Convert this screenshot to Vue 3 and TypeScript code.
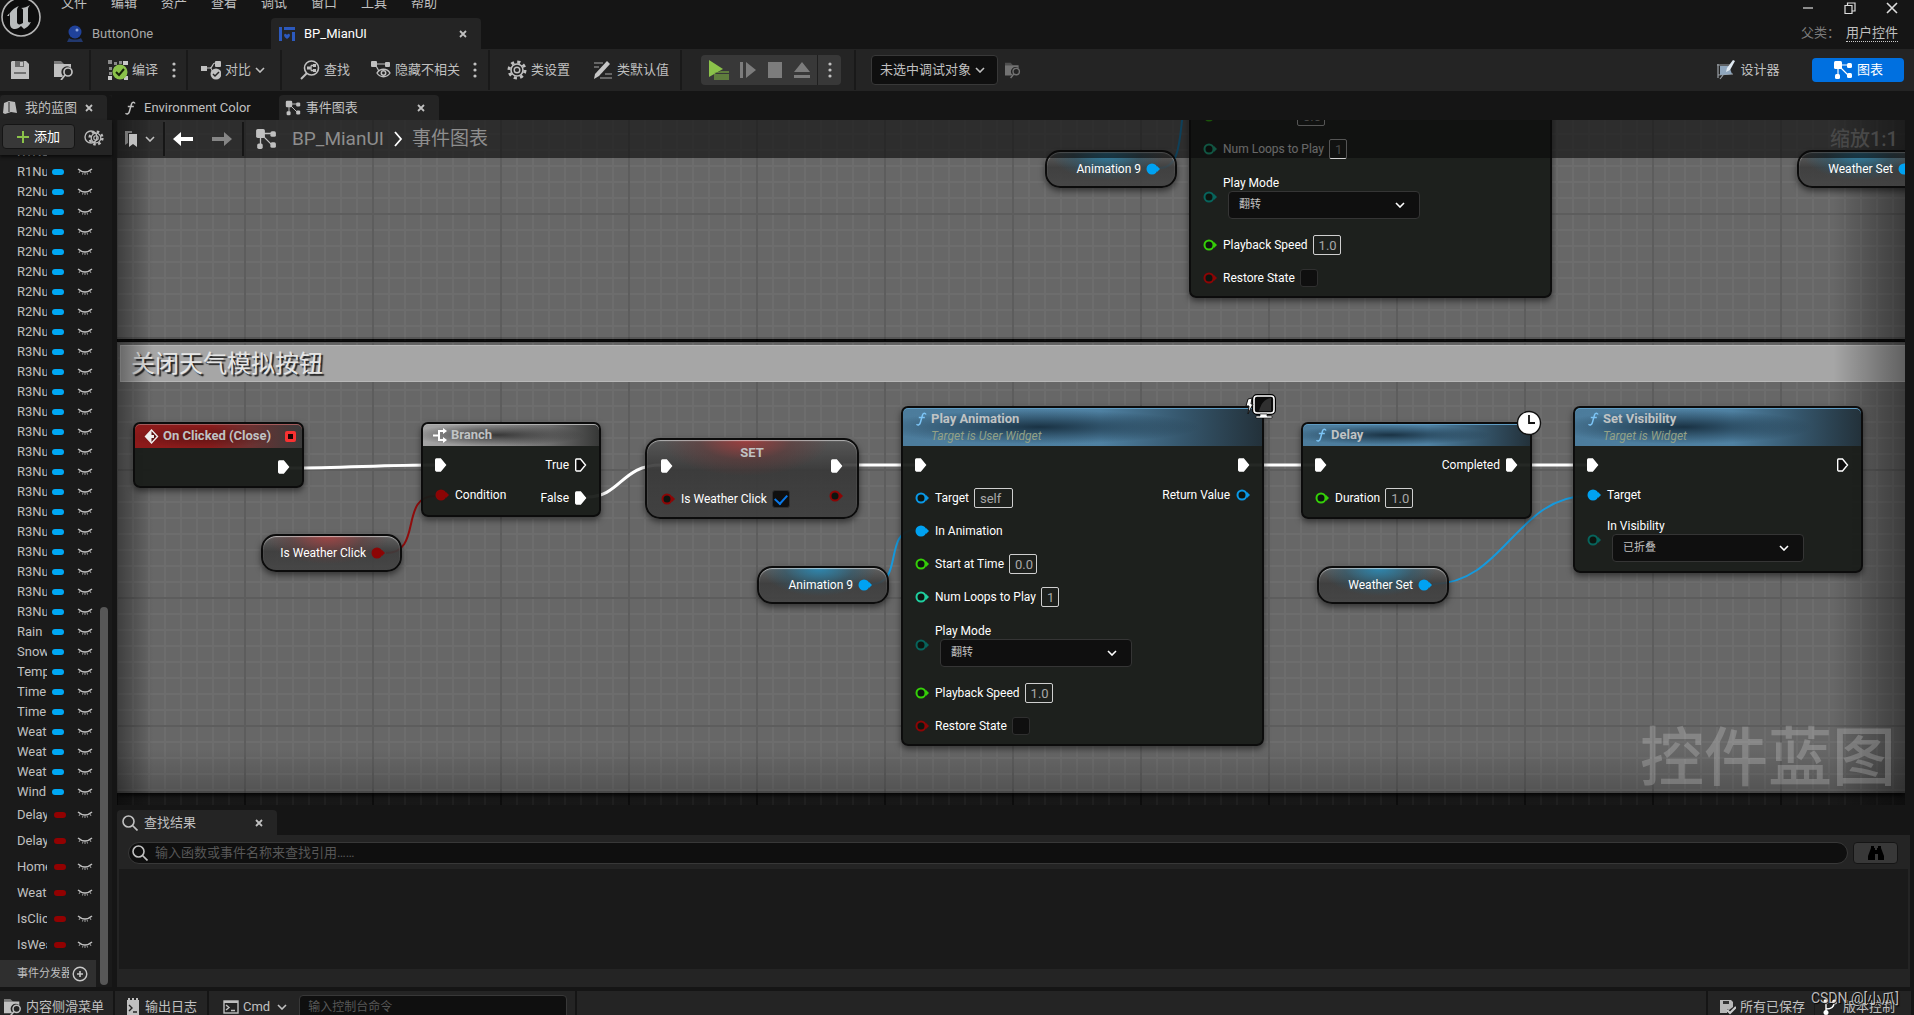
<script setup lang="ts">
import { ref } from 'vue'

type PinColor = 'object' | 'float' | 'int' | 'enum' | 'bool'

interface Pin {
  exec?: boolean
  color?: PinColor
  filled?: boolean
  label?: string
  value?: string
  size?: number
  combo?: string
  check?: boolean
  checked?: boolean
  compact?: boolean
}

interface GraphNode {
  id: string
  type: 'event' | 'branch' | 'func' | 'set' | 'getter'
  x: number
  y: number
  w: number
  h: number
  title?: string
  subtitle?: string
  tint?: 'red' | 'blue'
  badge?: 'clock' | 'screen'
  left?: Pin[]
  right?: Pin[]
}

interface Variable {
  name: string
  bool?: boolean
}

const menus = ['文件', '编辑', '资产', '查看', '调试', '窗口', '工具', '帮助']

const repeat = (name: string, count: number): Variable[] =>
  Array.from({ length: count }, () => ({ name }))

const variables: Variable[] = [
  ...repeat('R1Nu', 2),
  ...repeat('R2Nu', 8),
  ...repeat('R3Nu', 14),
  ...['Rain', 'Snow', 'Temp', 'Time', 'Time', 'Weath', 'Weath', 'Weath', 'Wind'].map((name) => ({ name })),
  ...['Delay', 'Delay', 'Home', 'Weath', 'IsClic', 'IsWea'].map((name) => ({ name, bool: true })),
]

const playAnimation = (id: string, x: number, y: number): GraphNode => ({
  id,
  type: 'func',
  x,
  y,
  w: 363,
  h: 340,
  title: 'Play Animation',
  subtitle: 'Target is User Widget',
  badge: 'screen',
  left: [
    { exec: true, filled: true },
    { color: 'object', label: 'Target', value: 'self', size: 39 },
    { color: 'object', filled: true, label: 'In Animation' },
    { color: 'float', label: 'Start at Time', value: '0.0', size: 28 },
    { color: 'int', label: 'Num Loops to Play', value: '1', size: 18 },
    { color: 'enum', label: 'Play Mode', combo: '翻转' },
    { color: 'float', label: 'Playback Speed', value: '1.0', size: 28 },
    { color: 'bool', label: 'Restore State', check: true },
  ],
  right: [
    { exec: true, filled: true },
    { color: 'object', label: 'Return Value', compact: true },
  ],
})

const getter = (id: string, x: number, y: number, w: number, title: string, tint: 'red' | 'blue'): GraphNode => ({
  id,
  type: 'getter',
  x,
  y,
  w,
  h: 38,
  title,
  tint,
})

const nodes = ref<GraphNode[]>([
  getter('anim-top', 928, 30, 132, 'Animation 9', 'blue'),
  playAnimation('play-top', 1072, -162),
  getter('weather-top', 1680, 30, 132, 'Weather Set', 'blue'),
  {
    id: 'clicked',
    type: 'event',
    x: 16,
    y: 302,
    w: 171,
    h: 66,
    title: 'On Clicked (Close)',
    right: [{ exec: true, filled: true }],
  },
  {
    id: 'branch',
    type: 'branch',
    x: 304,
    y: 302,
    w: 180,
    h: 95,
    title: 'Branch',
    left: [
      { exec: true, filled: true },
      { color: 'bool', filled: true, label: 'Condition', compact: true },
    ],
    right: [
      { exec: true, label: 'True' },
      { exec: true, filled: true, label: 'False' },
    ],
  },
  getter('is-click', 144, 414, 141, 'Is Weather Click', 'red'),
  {
    id: 'set',
    type: 'set',
    x: 528,
    y: 318,
    w: 214,
    h: 81,
    title: 'SET',
    left: [
      { exec: true, filled: true },
      { color: 'bool', label: 'Is Weather Click', check: true, checked: true },
    ],
    right: [
      { exec: true, filled: true },
      { color: 'bool', compact: true },
    ],
  },
  getter('anim', 640, 446, 132, 'Animation 9', 'blue'),
  playAnimation('play', 784, 286),
  {
    id: 'delay',
    type: 'func',
    x: 1184,
    y: 302,
    w: 231,
    h: 97,
    title: 'Delay',
    badge: 'clock',
    left: [
      { exec: true, filled: true },
      { color: 'float', label: 'Duration', value: '1.0', size: 28 },
    ],
    right: [{ exec: true, filled: true, label: 'Completed' }],
  },
  getter('weather', 1200, 446, 132, 'Weather Set', 'blue'),
  {
    id: 'visibility',
    type: 'func',
    x: 1456,
    y: 286,
    w: 290,
    h: 167,
    title: 'Set Visibility',
    subtitle: 'Target is Widget',
    left: [
      { exec: true, filled: true },
      { color: 'object', filled: true, label: 'Target', compact: true },
      { color: 'enum', label: 'In Visibility', combo: '已折叠' },
    ],
    right: [{ exec: true }],
  },
])

const wires = [
  { d: 'M173 348C225 348 266 345 318 345', kind: 'exec' },
  { d: 'M470 377C504 377 504 345 544 345', kind: 'exec' },
  { d: 'M726 345H798', kind: 'exec' },
  { d: 'M1133 345H1198', kind: 'exec' },
  { d: 'M1401 345H1470', kind: 'exec' },
  { d: 'M269 433C306 433 282 376 318 376', kind: 'bool' },
  { d: 'M755 464C787 464 766 410 798 410', kind: 'object' },
  { d: 'M1316 464C1386 464 1400 376 1470 376', kind: 'object' },
  { d: 'M1043 48C1077 48 1052 -38 1086 -38', kind: 'object' },
]
</script>

<template>
  <div class="editor">
    <svg class="defs" aria-hidden="true">
      <symbol id="chevron" viewBox="0 0 10 6"><path d="M1 1l4 4 4-4" fill="none" stroke="currentColor" stroke-width="1.6" /></symbol>
      <symbol id="cross" viewBox="0 0 8 8"><path d="M1 1l6 6M7 1L1 7" stroke="currentColor" stroke-width="1.8" /></symbol>
      <symbol id="dots" viewBox="0 0 4 18">
        <circle cx="2" cy="3" r="1.6" fill="currentColor" /><circle cx="2" cy="9" r="1.6" fill="currentColor" /><circle cx="2" cy="15" r="1.6" fill="currentColor" />
      </symbol>
      <symbol id="folder" viewBox="0 0 20 20">
        <path d="M0 1h7l3 3h-10z" fill="currentColor" opacity=".55" />
        <path d="M0 4h17v4a5.500 5.500 0 0 0-8 8l-1 1H0z" fill="currentColor" />
        <circle cx="14" cy="12" r="4" fill="none" stroke="currentColor" stroke-width="1.7" /><path d="M11 15l-4 5" stroke="currentColor" stroke-width="1.8" />
      </symbol>
      <symbol id="graph" viewBox="0 0 20 20">
        <path d="M5 5h11M5 5v12M6 6l10 10" stroke="currentColor" stroke-width="1.2" fill="none" />
        <rect x="1" y="1" width="8" height="8" rx="1.5" fill="currentColor" /><rect x="14" y="3" width="5" height="5" rx="1.5" fill="currentColor" />
        <rect x="2" y="14" width="5" height="5" rx="1.5" fill="currentColor" /><rect x="14" y="13" width="5" height="5" rx="1.5" fill="currentColor" />
      </symbol>
      <symbol id="magnifier" viewBox="0 0 16 16"><circle cx="6.5" cy="6.5" r="5.5" fill="none" stroke="currentColor" stroke-width="1.6" /><path d="M10.500 10.500l5 5" stroke="currentColor" stroke-width="1.7" /></symbol>
      <symbol id="func" viewBox="0 0 12 14"><path d="M11 2.500C10 .6 8.200 .8 7.500 3L5.400 10.500C4.800 13 3 13.500 1.500 12.200M3.800 5.500h6" fill="none" stroke="currentColor" stroke-width="1.5" /></symbol>
      <symbol id="eye" viewBox="0 0 16 8"><path d="M1 1Q8 7 15 1" fill="none" stroke="currentColor" stroke-width="1.5" /><path d="M3 3L2 5M6 4.500L5.500 6.500M8 4.500V7M10 4.500l.5 2M13 3l1 2" fill="none" stroke="currentColor" stroke-width="1" opacity=".8" /></symbol>
      <symbol id="disk" viewBox="0 0 18 18"><path d="M1 0h14l3 3v15H0V1z" fill="currentColor" /><path d="M4 0h9v6H4z" fill="#242424" opacity=".55" /><path d="M9 1h3v4H9z" fill="currentColor" /><path d="M3 12h12" stroke="#242424" stroke-width="1" /></symbol>
      <symbol id="gear" viewBox="0 0 20 20">
        <circle cx="10" cy="10" r="8" fill="none" stroke="currentColor" stroke-width="3" stroke-dasharray="3.14 3.14" />
        <circle cx="10" cy="10" r="6" fill="none" stroke="currentColor" stroke-width="1.6" /><circle cx="10" cy="10" r="2.8" fill="none" stroke="currentColor" stroke-width="1.4" />
      </symbol>
    </svg>

    <header class="titlebar">
      <svg class="logo" viewBox="0 0 42 42">
        <circle cx="21" cy="21" r="19" fill="#0d0d0d" stroke="#b4b4b4" stroke-width="1.6" />
        <path d="M9 20c1-5 5-8 10-10-1 1-2 2-2 4v12c0 2 2 3 4 2l2-1V14c0-1-1-2-2-2 3 0 6-1 9-3-1 1-2 3-2 4v12c0 1 1 2 3 1-2 4-5 6-7 7l-3-3c-2 2-4 3-6 3-3 0-5-2-5-5V18c0-1-1-1-3 2z" fill="#b9bcbd" />
      </svg>
      <div class="title-main">
        <nav class="menus"><button v-for="m in menus" :key="m" type="button">{{ m }}</button></nav>
        <div class="asset-tabs">
          <button type="button" class="asset-tab">
            <svg width="16" height="18" viewBox="0 0 16 18"><circle cx="8" cy="7" r="6.5" fill="#20429b" /><circle cx="10" cy="5" r="1.5" fill="#8ea6dc" /><path d="M0 17l2-4c3 2 9 2 12 0l2 4z" fill="#22386d" /></svg>
            ButtonOne
          </button>
          <div class="asset-tab active">
            <svg width="16" height="14" viewBox="0 0 16 14"><path d="M0 0h3v14H0zM5 0h11v3H5zM13 5h3v9h-3zM5 8c1-2 2-1 3 0 1-1 2-2 3 0 0 2-2 3-3 4-1-1-3-2-3-4z" fill="#2c59bd" /></svg>
            <span class="grow">BP_MianUI</span>
            <button type="button" aria-label="关闭"><svg width="8" height="8"><use href="#cross" /></svg></button>
          </div>
        </div>
      </div>
      <div class="window-side">
        <div class="window-buttons">
          <button type="button" aria-label="最小化"><svg width="12" height="12" viewBox="0 0 12 12"><path d="M1 6h10" stroke="#ddd" stroke-width="1.2" /></svg></button>
          <button type="button" aria-label="还原"><svg width="12" height="12" viewBox="0 0 12 12"><path d="M1 3.500h7v8H1zM3.500 3V1H11v8H8.500" fill="none" stroke="#ddd" stroke-width="1.2" /></svg></button>
          <button type="button" aria-label="关闭窗口"><svg width="12" height="12" viewBox="0 0 12 12"><path d="M1 1l10 10M11 1L1 11" stroke="#ddd" stroke-width="1.6" /></svg></button>
        </div>
        <div class="parent-class"><span>父类：</span><a href="#">用户控件</a></div>
      </div>
    </header>

    <div class="toolbar">
      <div class="group g-save">
        <button type="button" aria-label="保存"><svg width="20" height="18"><use href="#disk" /></svg></button>
        <button type="button" aria-label="浏览"><svg width="20" height="20"><use href="#folder" /></svg></button>
      </div>
      <div class="group g-compile">
        <button type="button">
          <svg width="20" height="20" viewBox="0 0 20 20">
            <path d="M0 0h4v4H0zM6 2h3v3H6zM11 1h3v3h-3zM16 1h4v4h-4zM1 7h3v3H1zM6 7h4v3H6zM1 12h3v3H1zM0 16h4v4H0z" fill="#8a8a8a" /><path d="M16 16h4v4h-4zM0 16h4v4H0zM15 1h5v4h-5z" fill="#c8c8c8" />
            <circle cx="12" cy="12" r="7.5" fill="#8bc24a" /><path d="M8 12l3 3 5-6" fill="none" stroke="#17240a" stroke-width="2" />
          </svg>
          编译
        </button>
        <button type="button" aria-label="编译选项"><svg width="4" height="18"><use href="#dots" /></svg></button>
      </div>
      <div class="group g-diff">
        <button type="button">
          <svg width="20" height="20" viewBox="0 0 20 20"><path d="M3 8h6M9 8c3 0 2-5 5-5M9 8c3 0 1 5 4 5" fill="none" stroke="#c0c0c0" stroke-width="1.2" /><rect x="0" y="6" width="6" height="5" fill="#c0c0c0" /><rect x="14" y="1" width="6" height="6" rx="1" fill="#c0c0c0" /><circle cx="15" cy="14" r="5.5" fill="#c0c0c0" /><path d="M12 14l2 2 4-4" fill="none" stroke="#242424" stroke-width="1.5" /></svg>
          对比
          <svg width="10" height="6"><use href="#chevron" /></svg>
        </button>
      </div>
      <div class="group g-find">
        <button type="button">
          <svg width="20" height="20" viewBox="0 0 20 20"><circle cx="11.5" cy="8" r="7" fill="none" stroke="#c0c0c0" stroke-width="1.6" /><path d="M7 13l-6 6" stroke="#c0c0c0" stroke-width="2" /><path d="M8 8h3M11 5.500v5M11 5.500h3M11 10.500h3" stroke="#c0c0c0" stroke-width="1.4" /><path d="M13 4h3v3h-3zM13 9h3v3h-3zM7 6.500h3v3H7z" fill="#c0c0c0" /></svg>
          查找
        </button>
        <button type="button">
          <svg width="20" height="20" viewBox="0 0 20 20"><path d="M3 4h13M4 4l5 9" stroke="#c0c0c0" stroke-width="1.2" /><rect x="0" y="1" width="6" height="6" rx="1" fill="#c0c0c0" /><rect x="14" y="2" width="5" height="5" rx="1" fill="#c0c0c0" /><path d="M6 13c3-5 10-5 13 0-3 5-10 5-13 0z" fill="#242424" stroke="#c0c0c0" stroke-width="1.4" /><circle cx="12.5" cy="13" r="2.2" fill="none" stroke="#c0c0c0" stroke-width="1.5" /></svg>
          隐藏不相关
        </button>
        <button type="button" aria-label="更多"><svg width="4" height="18"><use href="#dots" /></svg></button>
      </div>
      <div class="group g-class">
        <button type="button"><svg width="20" height="20"><use href="#gear" /></svg>类设置</button>
        <button type="button">
          <svg width="20" height="20" viewBox="0 0 20 20"><path d="M1 3h9M1 7h5M12 14h7M7 18h12" stroke="#7c7c7c" stroke-width="1.4" /><path d="M1 19l1-5L14 1l3 3L6 16z" fill="#c6c6c6" /></svg>
          类默认值
        </button>
      </div>
      <div class="play-group">
        <button type="button" aria-label="运行"><svg width="20" height="20" viewBox="0 0 20 20"><path d="M0 0l14 9-14 8z" fill="#8bc24a" /><path d="M5 14h15v6H5zM9 12l3-1h8v2H5z" fill="#5f7d3d" /></svg></button>
        <button type="button" aria-label="单步"><svg width="18" height="16" viewBox="0 0 18 16"><path d="M1 0h3v16H1zM7 0l10 8-10 8z" fill="#7c7c7c" /></svg></button>
        <button type="button" aria-label="停止"><svg width="16" height="16" viewBox="0 0 16 16"><path d="M1 0h14v16H1z" fill="#7c7c7c" /></svg></button>
        <button type="button" aria-label="弹出"><svg width="18" height="16" viewBox="0 0 18 16"><path d="M9 0l8 10H1zM1 13h16v3H1z" fill="#7c7c7c" /></svg></button>
        <button type="button" class="more" aria-label="运行选项"><svg width="4" height="18"><use href="#dots" /></svg></button>
      </div>
      <div class="debug-group">
        <span class="combo-wrap">
          <select class="debug-select" aria-label="调试对象"><option>未选中调试对象</option></select>
          <svg class="combo-arrow" width="10" height="6"><use href="#chevron" /></svg>
        </span>
        <button type="button" class="dim" aria-label="定位调试对象"><svg width="16" height="18"><use href="#folder" /></svg></button>
      </div>
      <div class="modes">
        <button type="button" class="mode">
          <svg width="20" height="20" viewBox="0 0 20 20"><path d="M1 5h13M2 4v14M2 15l15-1M4 19L15 5" stroke="#9aa0a6" stroke-width="1.2" /><path d="M4 6h9l3 8-12 1z" fill="#8fa6bd" /><path d="M17 0l2 1-5 9-4 2 1-4z" fill="#dfe8f0" /></svg>
          设计器
        </button>
        <button type="button" class="mode current"><svg width="20" height="20"><use href="#graph" /></svg>图表</button>
      </div>
    </div>

    <main class="work">
      <aside class="side">
        <div class="panel-tab side-tab">
          <svg width="14" height="14" viewBox="0 0 14 14"><path d="M1 2l5-2 6 1 2 11-6-1-6 2-2-1z" fill="#b9b9b9" /><path d="M6 1v10" stroke="#242424" /></svg>
          <span>我的蓝图</span>
          <button type="button" aria-label="关闭我的蓝图"><svg width="8" height="8"><use href="#cross" /></svg></button>
        </div>
        <div class="side-head">
          <button type="button" class="add"><svg width="12" height="12" viewBox="0 0 12 12"><path d="M6 0v12M0 6h12" stroke="#8bc24a" stroke-width="2" /></svg>添加</button>
          <button type="button" aria-label="设置"><svg width="20" height="18" viewBox="0 0 20 18"><circle cx="7" cy="8" r="6" fill="none" stroke="#bbb" stroke-width="1.4" /><g transform="translate(4 1) scale(.8)" color="#bbb"><use href="#gear" width="20" height="20" /></g></svg></button>
        </div>
        <div class="side-body">
          <ul class="vars">
            <li v-for="(v, i) in variables" :key="i" :class="{ bool: v.bool }">
              <span class="var-name">{{ v.name }}</span><i class="pill"></i><svg width="16" height="8"><use href="#eye" /></svg>
            </li>
          </ul>
          <div class="dispatchers">
            <span>事件分发器</span>
            <button type="button" aria-label="添加事件分发器"><svg width="16" height="16" viewBox="0 0 16 16"><circle cx="8" cy="8" r="6.8" fill="none" stroke="#c8c8c8" stroke-width="1.4" /><path d="M8 5v6M5 8h6" stroke="#c8c8c8" stroke-width="1.6" /></svg></button>
          </div>
          <div class="scroll-thumb"></div>
        </div>
      </aside>

      <div class="center">
        <div class="graph-tabs">
          <button type="button" class="panel-tab plain"><svg width="12" height="14"><use href="#func" /></svg>Environment Color</button>
          <div class="panel-tab graph-tab">
            <svg width="16" height="16"><use href="#graph" /></svg><span class="grow">事件图表</span>
            <button type="button" aria-label="关闭事件图表"><svg width="8" height="8"><use href="#cross" /></svg></button>
          </div>
        </div>

        <section class="canvas">
          <div class="comment upper"></div>
          <div class="comment lower"><h2>关闭天气模拟按钮</h2></div>
          <div class="vignette"></div>
          <svg class="wires" aria-hidden="true"><path v-for="w in wires" :key="w.d" :d="w.d" :class="w.kind" /></svg>

          <article
            v-for="n in nodes"
            :key="n.id"
            :class="['node', n.type, n.tint, { tall: n.subtitle }]"
            :style="{ left: n.x + 'px', top: n.y + 'px', width: n.w + 'px', height: n.h + 'px' }"
          >
            <template v-if="n.type === 'getter'">
              <span class="label">{{ n.title }}</span>
              <svg :class="['pin', n.tint === 'red' ? 'bool' : 'object', 'filled']" viewBox="0 0 14 12"><circle cx="6" cy="6" r="4.5" /><path d="M11 3l3 3-3 3z" /></svg>
            </template>
            <template v-else>
              <header class="node-head">
                <svg v-if="n.type === 'event'" class="head-icon" width="15" height="15" viewBox="0 0 15 15"><path d="M7.500 1l6 6.500-6 6.500-6-6.500z" fill="#5a0f0f" stroke="#eee" stroke-width="1.4" /><path d="M7.500 1v5H10v3H7.500v5l-6-6.500z" fill="#eee" /></svg>
                <svg v-else-if="n.type === 'branch'" class="head-icon" width="15" height="15" viewBox="0 0 15 15"><path d="M0 7.500h6M12 3H6v9h6" fill="none" stroke="#fff" stroke-width="2" /><path d="M10 0l4 3-4 3zM10 9l4 3-4 3z" fill="#fff" /></svg>
                <svg v-else-if="n.type === 'func'" class="head-icon blue-f" width="12" height="14"><use href="#func" /></svg>
                <div class="titles"><h3>{{ n.title }}</h3><p v-if="n.subtitle">{{ n.subtitle }}</p></div>
                <i v-if="n.type === 'event'" class="delegate"></i>
              </header>
              <svg v-if="n.badge === 'clock'" class="badge clock" width="26" height="26" viewBox="0 0 26 26"><circle cx="13" cy="13" r="11.5" fill="#fff" stroke="#111" stroke-width="1.4" /><path d="M13 5v8h6" fill="none" stroke="#111" stroke-width="1.8" /></svg>
              <svg v-if="n.badge === 'screen'" class="badge screen" width="32" height="28" viewBox="0 0 32 28"><rect x="9" y="2" width="20" height="17" rx="3" fill="#000" stroke="#000" stroke-width="4" /><rect x="9" y="2" width="20" height="17" rx="3" fill="#0b0b0b" stroke="#fff" stroke-width="1.6" /><path d="M14 17c2-7 5-12 12-13v13z" fill="#303030" /><path d="M15 20h7v2h5v2H11v-2h4z" fill="#fff" stroke="#000" stroke-width=".6" /><path d="M3 5l4-1-1 6h2L3 20l1-8H1z" fill="#fff" stroke="#111" stroke-width="1" /></svg>
              <div class="pins">
                <div v-for="side in (['left', 'right'] as const)" :key="side" :class="['col', side]">
                  <div v-for="(p, i) in n[side] ?? []" :key="i" :class="['row', { compact: p.compact, combo: p.combo }]">
                    <svg v-if="p.exec" :class="['exec-pin', { filled: p.filled }]" viewBox="0 0 12 14"><path d="M1.500 1h4l5 6-5 6h-4a1 1 0 0 1-.8-1V2a1 1 0 0 1 .8-1z" stroke-width="1.4" /></svg>
                    <svg v-else :class="['pin', p.color, { filled: p.filled }]" viewBox="0 0 14 12"><circle cx="6" cy="6" r="4.5" /><path d="M11 3l3 3-3 3z" /></svg>
                    <label v-if="p.combo" class="combo-field">
                      <span class="label">{{ p.label }}</span>
                      <span class="combo-wrap">
                        <select><option>{{ p.combo }}</option></select>
                        <svg class="combo-arrow" width="10" height="6"><use href="#chevron" /></svg>
                      </span>
                    </label>
                    <label v-else-if="p.value || p.check" class="field">
                      <span class="label">{{ p.label }}</span>
                      <input v-if="p.value" v-model="p.value" type="text" :style="{ width: p.size + 'px' }" />
                      <input v-else v-model="p.checked" type="checkbox" />
                    </label>
                    <span v-else-if="p.label" class="label">{{ p.label }}</span>
                  </div>
                </div>
              </div>
            </template>
          </article>

          <div class="graph-bar">
            <button type="button" class="bookmark" aria-label="书签"><svg width="12" height="16" viewBox="0 0 12 16"><path d="M0 0h7v2H3v10l-3 2z" fill="#777" /><path d="M4 3h8v13l-4-3-4 3z" fill="#c0c0c0" /></svg><svg width="10" height="6"><use href="#chevron" /></svg></button>
            <div class="history">
              <button type="button" aria-label="后退"><svg width="20" height="14" viewBox="0 0 20 14"><path d="M0 7l8-7v5h12v4H8v5z" fill="#fff" /></svg></button>
              <button type="button" aria-label="前进"><svg width="20" height="14" viewBox="0 0 20 14"><path d="M20 7l-8-7v5H0v4h12v5z" fill="#858585" /></svg></button>
            </div>
            <svg class="crumb-icon" width="24" height="22"><use href="#graph" /></svg>
            <span class="crumb">BP_MianUI</span>
            <svg class="crumb-sep" width="9" height="16" viewBox="0 0 9 16"><path d="M1 1l6 7-6 7" fill="none" stroke="#fff" stroke-width="1.8" /></svg>
            <span class="crumb">事件图表</span>
            <span class="zoom">缩放1:1</span>
          </div>
          <div class="graph-mark">控件蓝图</div>
        </section>

        <section class="results">
          <div class="panel-tab results-tab">
            <svg width="16" height="16"><use href="#magnifier" /></svg><span class="grow">查找结果</span>
            <button type="button" aria-label="关闭查找结果"><svg width="8" height="8"><use href="#cross" /></svg></button>
          </div>
          <div class="results-body">
            <div class="search-row">
              <label class="search"><svg width="16" height="16"><use href="#magnifier" /></svg><input type="text" aria-label="查找" placeholder="输入函数或事件名称来查找引用……" /></label>
              <button type="button" class="global-find" aria-label="全局查找"><svg width="16" height="14" viewBox="0 0 16 14"><path d="M3 0h3v2h1v2h2V2h1V0h3v2l3 8v4h-6V8H7v6H0v-4l3-8z" fill="#000" /></svg></button>
            </div>
            <div class="result-list"></div>
          </div>
        </section>
      </div>
    </main>

    <footer class="status">
      <button type="button" class="cell drawer"><svg width="18" height="18"><use href="#folder" /></svg>内容侧滑菜单</button>
      <button type="button" class="cell log"><svg width="12" height="18" viewBox="0 0 12 18"><path d="M0 2h1V0h2v2h2V0h2v2h2V0h2v2h1v16H0z" fill="#c0c0c0" /><path d="M2 7l3 3-3 3M6 14h4" fill="none" stroke="#242424" stroke-width="1.4" /></svg>输出日志</button>
      <div class="cell console">
        <button type="button"><svg width="16" height="14" viewBox="0 0 16 14"><rect x="1" y="1" width="14" height="12" fill="none" stroke="#c0c0c0" stroke-width="1.4" /><path d="M1 2h14" stroke="#c0c0c0" stroke-width="2" /><path d="M3 5l3 2.500L3 10M8 10.500h4" fill="none" stroke="#c0c0c0" stroke-width="1.4" /></svg>Cmd<svg width="10" height="6"><use href="#chevron" /></svg></button>
        <input type="text" aria-label="控制台命令" placeholder="输入控制台命令" />
      </div>
      <div class="cell grow"></div>
      <div class="cell source">
        <button type="button"><svg width="16" height="16" viewBox="0 0 16 16"><path d="M0 1h11l2 2v5l-4 3-2-1v4H0z" fill="#b8b8b8" /><path d="M3 2h6v3H3z" fill="#333" /><path d="M7 11l3 3 6-6" fill="none" stroke="#ccc" stroke-width="2.2" /></svg>所有已保存</button>
        <button type="button" class="vcs"><svg width="14" height="16" viewBox="0 0 14 16"><path d="M3 2v12M3 10c6 0 8-2 8-6" fill="none" stroke="#fff" stroke-width="1.4" /><circle cx="3" cy="2.5" r="2.5" fill="#fff" /><circle cx="3" cy="13.5" r="2.5" fill="#fff" /><circle cx="11.5" cy="3" r="2.5" fill="#fff" /></svg>版本控制</button>
      </div>
      <span class="credit">CSDN @[小瓜]</span>
    </footer>
  </div>
</template>

<style>
html,
body,
#app {
  height: 100%;
}
body {
  margin: 0;
  background: #151515;
}
</style>

<style scoped>
* {
  box-sizing: border-box;
}
.editor {
  display: flex;
  flex-direction: column;
  height: 100%;
  overflow: hidden;
  background: #151515;
  color: #c0c0c0;
  font: 13px/16px Roboto, 'Noto Sans CJK SC', sans-serif;
}
.defs {
  position: absolute;
  width: 0;
  height: 0;
}
svg {
  display: block;
  flex: none;
}
button {
  display: flex;
  align-items: center;
  gap: 4px;
  padding: 0;
  border: 0;
  background: none;
  color: inherit;
  font: inherit;
  white-space: nowrap;
}
input,
select {
  font: inherit;
  margin: 0;
}
select {
  appearance: none;
}
h2,
h3,
p,
ul {
  margin: 0;
  padding: 0;
}
.grow {
  flex: 1;
}

/* title bar */
.titlebar {
  display: flex;
  flex: none;
  height: 49px;
  overflow: hidden;
}
.logo {
  width: 42px;
  height: 42px;
  margin-top: -4px;
}
.title-main {
  display: flex;
  flex-direction: column;
  justify-content: space-between;
}
.menus {
  display: flex;
  gap: 24px;
  height: 18px;
  margin-left: 19px;
}
.menus button {
  height: 16px;
  margin-top: -5px;
}
.asset-tabs {
  display: flex;
  height: 31px;
}
.asset-tab {
  display: flex;
  align-items: center;
  gap: 9px;
  width: 204px;
  margin-left: 25px;
  color: #a8a8a8;
}
.asset-tab.active {
  width: 210px;
  margin: 0;
  padding: 0 14px 0 8px;
  border-radius: 4px 4px 0 0;
  background: #242424;
  color: #fff;
}
.active button {
  color: #c0c0c0;
}
.window-side {
  display: flex;
  flex-direction: column;
  align-items: flex-end;
  gap: 11px;
  margin-left: auto;
  padding: 2px 16px 0 0;
}
.window-buttons {
  display: flex;
  gap: 30px;
}
.parent-class {
  display: flex;
  gap: 6px;
  color: #7c7c7c;
}
.parent-class a {
  border-bottom: 1px dotted #ccc;
  color: #c0c0c0;
  text-decoration: none;
}

/* main toolbar */
.toolbar {
  display: flex;
  align-items: center;
  flex: none;
  height: 42px;
  background: #242424;
}
.group {
  display: flex;
  align-items: center;
  height: 40px;
  border-right: 2px solid #191919;
}
.g-save {
  gap: 24px;
  padding: 0 15px 0 10px;
}
.g-compile {
  gap: 14px;
  padding: 0 10px 0 17px;
}
.g-diff {
  padding: 0 15px 0 13px;
}
.g-find {
  gap: 21px;
  padding: 0 11px 0 18px;
}
.g-find button:last-child {
  margin-left: -8px;
}
.g-class {
  gap: 23px;
  padding: 0 11px 0 17px;
}
.play-group {
  display: flex;
  align-items: center;
  gap: 10px;
  height: 30px;
  margin-left: 19px;
  padding-left: 8px;
  border-radius: 4px;
  background: #383838;
}
.play-group .more {
  justify-content: center;
  width: 24px;
  height: 30px;
  margin-left: -4px;
  border-left: 1px solid #1f1f1f;
}
.debug-group {
  display: flex;
  align-items: center;
  gap: 7px;
  height: 40px;
  margin-left: 13px;
  padding-left: 15px;
  border-left: 2px solid #191919;
}
.combo-wrap {
  display: flex;
  position: relative;
}
.combo-arrow {
  position: absolute;
  top: calc(50% - 3px);
  right: 13px;
  pointer-events: none;
}
.debug-select {
  width: 127px;
  height: 30px;
  padding: 0 0 0 8px;
  border: 1px solid #383838;
  border-radius: 4px;
  background: #0f0f0f;
  color: #c0c0c0;
}
.dim {
  opacity: 0.5;
}
.modes {
  display: flex;
  gap: 18px;
  margin-left: auto;
  padding-right: 10px;
}
.mode {
  justify-content: center;
  width: 92px;
  height: 24px;
  border-radius: 4px;
}
.mode.current {
  background: #0070e0;
  color: #fff;
}

/* workspace */
.work {
  display: flex;
  flex: 1;
  min-height: 0;
  padding: 4px 0;
}
.panel-tab {
  display: flex;
  align-items: center;
  flex: none;
  height: 25px;
  border-radius: 4px 4px 0 0;
  background: #242424;
}
.side {
  display: flex;
  flex-direction: column;
  flex: none;
  width: 112px;
  margin-right: 5px;
  background: #1a1a1a;
}
.side-tab {
  gap: 8px;
  padding-left: 3px;
  box-shadow: inset -5px 0 #151515;
}
.side-head {
  display: flex;
  position: relative;
  z-index: 1;
  flex: none;
  gap: 9px;
  height: 35px;
  padding: 4px 2px;
  background: #242424;
  box-shadow: 0 2px 3px rgba(0, 0, 0, 0.6);
}
.add {
  gap: 5px;
  justify-content: center;
  width: 73px;
  height: 25px;
  border: 1px solid #151515;
  border-radius: 4px;
  background: #383838;
  color: #fff;
}
.side-body {
  position: relative;
  flex: 1;
  min-height: 0;
  overflow: hidden;
}
.vars {
  margin-top: -13px;
  list-style: none;
}
.vars li {
  display: flex;
  align-items: center;
  height: 20px;
  padding-left: 17px;
}
.vars li.bool {
  height: 26px;
}
.var-name {
  width: 30px;
  margin-right: 5px;
  overflow: hidden;
}
.pill {
  width: 12px;
  height: 6px;
  margin-right: 13px;
  border-radius: 3px;
  background: #00a8f5;
}
.bool .pill {
  margin: 0 11px 0 2px;
  background: #920101;
}
.dispatchers {
  display: flex;
  align-items: center;
  gap: 3px;
  width: 96px;
  height: 27px;
  margin-top: 2px;
  padding-left: 17px;
  background: #2f2f2f;
  font-size: 11px;
}
.dispatchers span {
  width: 52px;
  overflow: hidden;
  white-space: nowrap;
}
.scroll-thumb {
  position: absolute;
  right: 4px;
  bottom: 2px;
  width: 8px;
  height: 378px;
  border-radius: 4px;
  background: #575757;
}
.center {
  display: flex;
  flex-direction: column;
  flex: 1;
  min-width: 0;
}
.graph-tabs {
  display: flex;
  flex: none;
  gap: 28px;
}
.panel-tab.plain {
  gap: 8px;
  padding-left: 7px;
  background: none;
}
.graph-tab {
  gap: 5px;
  width: 160px;
  padding: 0 14px 0 6px;
}

/* blueprint canvas */
.canvas {
  position: relative;
  flex: 1;
  min-height: 0;
  margin-right: 9px;
  overflow: hidden;
  background-color: #1f1f1f;
  background-image:
    linear-gradient(90deg, #111 2px, transparent 2px),
    linear-gradient(#111 2px, transparent 2px),
    linear-gradient(90deg, #292929 2px, transparent 2px),
    linear-gradient(#292929 2px, transparent 2px);
  background-size: 128px 128px, 128px 128px, 16px 16px, 16px 16px;
  background-position: 127px 0, 0 93px, 15px 0, 0 13px;
}
.comment {
  position: absolute;
  right: 0;
  left: 0;
  border-bottom: 2px solid rgba(0, 0, 0, 0.15);
  background: rgba(255, 255, 255, 0.32);
  box-shadow: 0 2px 5px #000;
}
.upper {
  top: 0;
  height: 219px;
}
.lower {
  top: 222px;
  height: 451px;
  padding: 3px 0 0 3px;
}
.lower h2 {
  height: 37px;
  padding-left: 10px;
  border: 1px solid #b8b8b8;
  border-right: 0;
  background: #a6a6a6;
  color: #e6e6e6;
  font-size: 24px;
  font-weight: 400;
  line-height: 37px;
  text-shadow: 2px 2px 1px #222;
}
.vignette {
  position: absolute;
  inset: 0;
  background:
    linear-gradient(90deg, rgba(0, 0, 0, 0.4), transparent 36px),
    linear-gradient(270deg, rgba(0, 0, 0, 0.42), transparent 72px),
    linear-gradient(0deg, rgba(0, 0, 0, 0.25), transparent 56px);
}
.wires {
  position: absolute;
  width: 100%;
  height: 100%;
  fill: none;
}
.wires .exec {
  stroke: #fff;
  stroke-width: 3;
}
.wires .bool {
  stroke: #8f0d0d;
  stroke-width: 2;
}
.wires .object {
  stroke: #1699dc;
  stroke-width: 2;
}
.node {
  position: absolute;
  border: 2px solid #0c0c0c;
  border-radius: 7px;
  background: rgba(25, 28, 25, 0.95);
  box-shadow: 0 3px 6px rgba(0, 0, 0, 0.5);
  color: #fff;
}
.label {
  color: #fff;
  font-size: 12px;
  white-space: nowrap;
}
.node-head {
  display: flex;
  height: 22px;
  padding: 3px 12px 0;
  border-radius: 5px 5px 0 0;
}
.tall .node-head {
  height: 38px;
}
.head-icon {
  margin: 1px 3px 0 -2px;
}
.head-icon.blue-f {
  margin: 1px 4px 0 0;
  color: #7cc4f5;
}
.titles {
  flex: 1;
}
.node h3 {
  color: #c0c3c4;
  font-size: 13px;
  font-weight: 700;
  line-height: 16px;
  white-space: nowrap;
}
.node p {
  color: #93a186;
  font-size: 12px;
  font-style: italic;
  line-height: 18px;
}
.func .node-head {
  background:
    radial-gradient(ellipse 45% 45% at 38% 50%, rgba(20, 42, 58, 0.9), rgba(20, 42, 58, 0.4) 55%, transparent),
    linear-gradient(90deg, #4c7c9c, #4f81a2 55%, #35566c 78%, #23313a);
  box-shadow: inset 0 1px #5e9cc4;
}
.event .node-head {
  height: 24px;
  background:
    radial-gradient(ellipse 45% 45% at 40% 55%, rgba(70, 14, 14, 0.6), transparent),
    linear-gradient(90deg, #8d1a1a, #8a1c1c 45%, #6b3232 70%, #3a3b3b);
  box-shadow: inset 0 1px #a35a5a;
}
.branch .node-head {
  background:
    radial-gradient(ellipse 50% 50% at 42% 50%, rgba(40, 40, 40, 0.85), transparent),
    linear-gradient(90deg, #a4a4a4, #8e8e8e 45%, #6e6e6e 72%, #373837);
  box-shadow: inset 0 1px #b0b0b0;
}
.event .head-icon {
  margin: 2px 4px 0 -3px;
}
.event h3 {
  line-height: 18px;
}
.delegate {
  width: 11px;
  height: 11px;
  margin: 4px -6px 0 0;
  border: 3px solid #f93131;
  border-radius: 2px;
  background: #1d0505;
}
.badge {
  position: absolute;
}
.badge.clock {
  top: -14px;
  right: -12px;
}
.badge.screen {
  top: -14px;
  right: -15px;
}
.pins {
  display: flex;
  justify-content: space-between;
  padding: 9px 12px 0;
}
.col {
  display: flex;
  flex-direction: column;
  gap: 13px;
}
.row {
  display: flex;
  align-items: center;
  gap: 6px;
  height: 20px;
}
.row.compact {
  height: 14px;
}
.row.combo {
  height: 50px;
}
.right .row {
  flex-direction: row-reverse;
}
.field {
  display: flex;
  align-items: center;
  gap: 5px;
}
.exec-pin {
  width: 12px;
  height: 14px;
  fill: #0d0d0d;
  stroke: #fff;
}
.exec-pin.filled {
  fill: #fff;
}
.pin {
  width: 14px;
  height: 12px;
  color: #0a98e6;
  stroke: currentColor;
}
.pin circle {
  fill: #0d1510;
  stroke-width: 2px;
}
.pin path {
  fill: currentColor;
  stroke: none;
}
.pin.filled circle {
  fill: currentColor;
}
.pin.filled {
  color: #00a2f2;
}
.pin.float {
  color: #35cf08;
}
.pin.int {
  color: #1fcf9f;
}
.pin.enum {
  color: #07645c;
}
.pin.bool {
  color: #8c0505;
}
.row input[type='text'] {
  height: 20px;
  padding: 0 0 0 5px;
  border: 1px solid #cfcfcf;
  border-radius: 2px;
  background: none;
  color: #a8a8a8;
}
.row input[type='checkbox'] {
  appearance: none;
  display: grid;
  place-items: center;
  width: 18px;
  height: 18px;
  border: 1px solid #2f2f2f;
  border-radius: 3px;
  background: #0f0f0f;
}
.row input[type='checkbox']:checked::before {
  width: 10px;
  height: 6px;
  margin-bottom: 3px;
  border: solid #0a78e8;
  border-width: 0 0 2px 2px;
  content: '';
  transform: rotate(-48deg);
}
.combo-field {
  display: flex;
  flex-direction: column;
}
.combo-field .combo-wrap {
  margin-left: 5px;
}
.combo-field select {
  width: 192px;
  height: 28px;
  padding: 0 0 0 10px;
  border: 1px solid #353535;
  border-radius: 4px;
  background: #0f0f0f;
  color: #c0c0c0;
  font-size: 11px;
}
.combo-field .combo-arrow {
  right: 15px;
}
.set,
.getter {
  border-radius: 15px;
  box-shadow: inset 0 1px 1px rgba(255, 255, 255, 0.55), 0 3px 6px rgba(0, 0, 0, 0.5);
}
.set {
  background:
    radial-gradient(ellipse 40% 36px at 47% 0, rgba(165, 60, 60, 0.9), rgba(110, 50, 50, 0.4) 55%, transparent),
    linear-gradient(rgba(85, 85, 85, 0.92), rgba(56, 56, 56, 0.92) 40%, rgba(62, 62, 62, 0.92));
}
.set .node-head {
  justify-content: center;
  height: 16px;
  padding-top: 5px;
  text-align: center;
}
.set .pins {
  padding: 0 14px;
}
.getter {
  display: flex;
  align-items: center;
  justify-content: flex-end;
  gap: 5px;
  padding-right: 15px;
}
.getter.blue {
  background:
    radial-gradient(ellipse 45% 28px at 47% 0, rgba(40, 140, 185, 0.9), rgba(40, 95, 120, 0.5) 60%, transparent),
    linear-gradient(rgba(95, 95, 95, 0.9), rgba(60, 60, 60, 0.9) 45%, rgba(66, 66, 66, 0.9));
}
.getter.red {
  background:
    radial-gradient(ellipse 45% 28px at 47% 0, rgba(165, 65, 65, 0.9), rgba(105, 60, 60, 0.5) 60%, transparent),
    linear-gradient(rgba(95, 95, 95, 0.9), rgba(60, 60, 60, 0.9) 45%, rgba(66, 66, 66, 0.9));
}
.graph-bar {
  display: flex;
  position: absolute;
  top: 0;
  right: 0;
  left: 0;
  align-items: center;
  height: 38px;
  padding-right: 7px;
  background: rgba(10, 10, 10, 0.62);
  color: #8e8e8e;
}
.bookmark {
  gap: 8px;
  height: 34px;
  padding: 0 8px 0 8px;
  border-right: 2px solid #161616;
  color: #c0c0c0;
}
.history {
  display: flex;
  gap: 19px;
  height: 34px;
  padding: 0 10px 0 8px;
  border-right: 2px solid #161616;
}
.crumb-icon {
  margin: 0 14px 0 10px;
  color: #c0c0c0;
}
.crumb {
  font-size: 19px;
  line-height: 24px;
}
.crumb-sep {
  margin: 0 9px 0 10px;
}
.zoom {
  margin-left: auto;
  color: #484848;
  font-size: 20px;
  font-weight: 500;
}
.graph-mark {
  position: absolute;
  right: 9px;
  bottom: 14px;
  color: rgba(255, 255, 255, 0.2);
  font-size: 64px;
  font-weight: 500;
  line-height: 64px;
}

/* find results */
.results {
  flex: none;
  margin-top: 5px;
  padding-right: 4px;
}
.results-tab {
  gap: 6px;
  width: 160px;
  padding: 0 14px 0 5px;
}
.results-body {
  padding: 7px 2px 18px;
  background: #242424;
}
.search-row {
  display: flex;
  gap: 5px;
  padding: 0 10px 0 9px;
}
.search {
  display: flex;
  flex: 1;
  align-items: center;
  gap: 7px;
  height: 22px;
  padding-left: 3px;
  border: 1px solid #383838;
  border-radius: 11px;
  background: #0f0f0f;
}
.search input {
  flex: 1;
  padding: 0;
  border: 0;
  background: none;
  color: #c0c0c0;
}
input::placeholder {
  color: #575757;
  opacity: 1;
}
.global-find {
  justify-content: center;
  width: 45px;
  height: 22px;
  border: 1px solid #151515;
  border-radius: 4px;
  background: #383838;
}
.result-list {
  height: 100px;
  margin-top: 5px;
  background: #1a1a1a;
}

/* status bar */
.status {
  display: flex;
  position: relative;
  flex: none;
  gap: 2px;
  height: 24px;
  padding-right: 3px;
  overflow: hidden;
}
.cell {
  display: flex;
  align-items: center;
  height: 32px;
  background: #242424;
}
.drawer {
  width: 113px;
  padding-left: 4px;
}
.log {
  gap: 6px;
  width: 92px;
  padding-left: 12px;
}
.console {
  gap: 12px;
  width: 366px;
  padding: 0 8px 0 14px;
}
.console button svg:last-child {
  margin-left: 3px;
}
.console input {
  flex: 1;
  min-width: 0;
  height: 24px;
  padding: 0 0 0 8px;
  border: 1px solid #383838;
  border-radius: 4px;
  background: #0f0f0f;
  color: #c0c0c0;
  font-size: 12px;
}
.source {
  gap: 9px;
  width: 203px;
  padding-left: 12px;
}
.vcs {
  gap: 6px;
  padding-left: 8px;
  border-left: 1px solid #1a1a1a;
}
.credit {
  position: absolute;
  top: -1px;
  right: 15px;
  color: rgba(220, 220, 220, 0.85);
  font-size: 14px;
  text-shadow: 1px 1px 1px #000;
}
</style>
